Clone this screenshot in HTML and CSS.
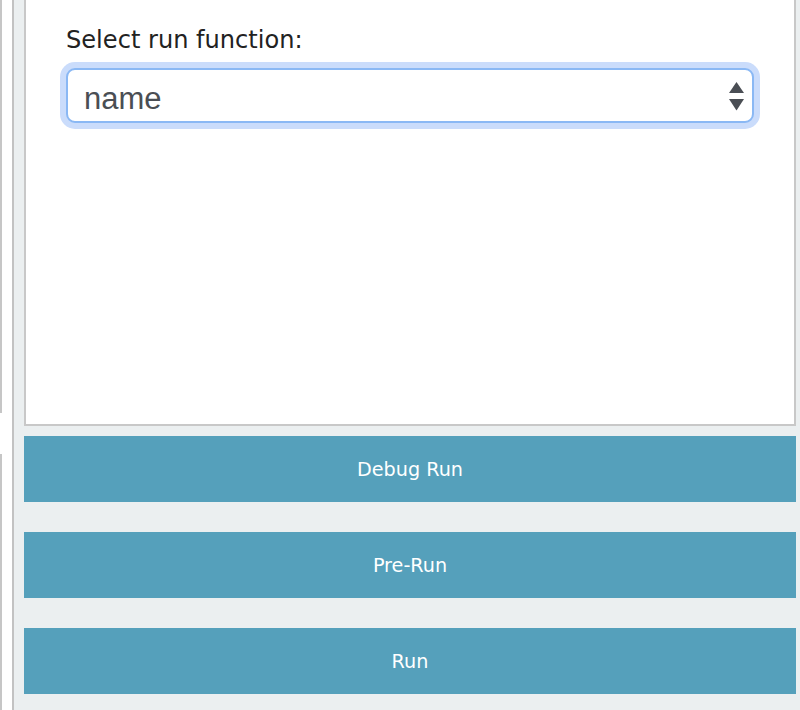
FILE: index.html
```html
<!DOCTYPE html>
<html>
<head>
<meta charset="utf-8">
<link rel="stylesheet" href="styles.css">
</head>
<body>
<div class="page">
  <div class="side">
    <div class="side-seg side-seg-top"></div>
    <div class="side-seg side-seg-bottom"></div>
  </div>
  <div class="main">
    <div class="panel">
      <label class="field-label">Select run function:</label>
      <div class="select">
        <span class="select-value">name</span>
        <svg class="select-arrows" width="15" height="29" viewBox="0 0 15 29">
          <polygon points="7.5,0 15,11 0,11" fill="#4a4e54"/>
          <polygon points="0,17 15,17 7.5,28.5" fill="#4a4e54"/>
        </svg>
      </div>
    </div>
    <div class="actions">
      <button class="btn">Debug Run</button>
      <button class="btn">Pre-Run</button>
      <button class="btn">Run</button>
    </div>
  </div>
</div>
</body>
</html>
```
FILE: styles.css
```css
html, body {
  margin: 0;
  padding: 0;
  background: #ffffff;
}
.page {
  display: flex;
  width: 800px;
  height: 710px;
  overflow: hidden;
}
.side {
  width: 12px;
  flex: none;
  background: #ffffff;
  display: flex;
  flex-direction: column;
}
.side-seg {
  border-left: 2px solid #c6c6c6;
}
.side-seg-top {
  height: 413px;
}
.side-seg-bottom {
  margin-top: 41px;
  flex: 1;
}
.main {
  flex: 1;
  background: #ebeff0;
  border-left: 2px solid #c2c2c2;
  padding: 0 4px 0 10px;
  display: flex;
  flex-direction: column;
}
.panel {
  box-sizing: border-box;
  height: 426px;
  background: #ffffff;
  border: 2px solid #c8c8c8;
  border-top: none;
  padding: 26px 40px 0 40px;
}
.field-label {
  display: block;
  font-family: "DejaVu Sans", Verdana, sans-serif;
  font-size: 24.1px;
  line-height: 28px;
  color: #222222;
  margin-bottom: 14px;
}
.select {
  box-sizing: border-box;
  height: 55px;
  width: 688px;
  border: 2px solid #8ab8f4;
  border-radius: 9px;
  box-shadow: 0 0 0 6px #cadcfb;
  background: #ffffff;
  display: flex;
  align-items: center;
  justify-content: space-between;
  padding: 0 8px 0 16px;
}
.select-value {
  font-family: "Liberation Sans", Arial, sans-serif;
  font-size: 31px;
  line-height: 35px;
  color: #4a4e54;
  padding-top: 5px;
}
.select-arrows {
  display: block;
  margin-top: 1px;
}
.actions {
  display: flex;
  flex-direction: column;
  gap: 30px;
  margin-top: 10px;
}
.btn {
  height: 66px;
  width: 100%;
  border: none;
  margin: 0;
  background: #55a0bb;
  color: #ffffff;
  font-family: "DejaVu Sans", Verdana, sans-serif;
  font-size: 19.2px;
  padding: 0;
  cursor: pointer;
}
```
